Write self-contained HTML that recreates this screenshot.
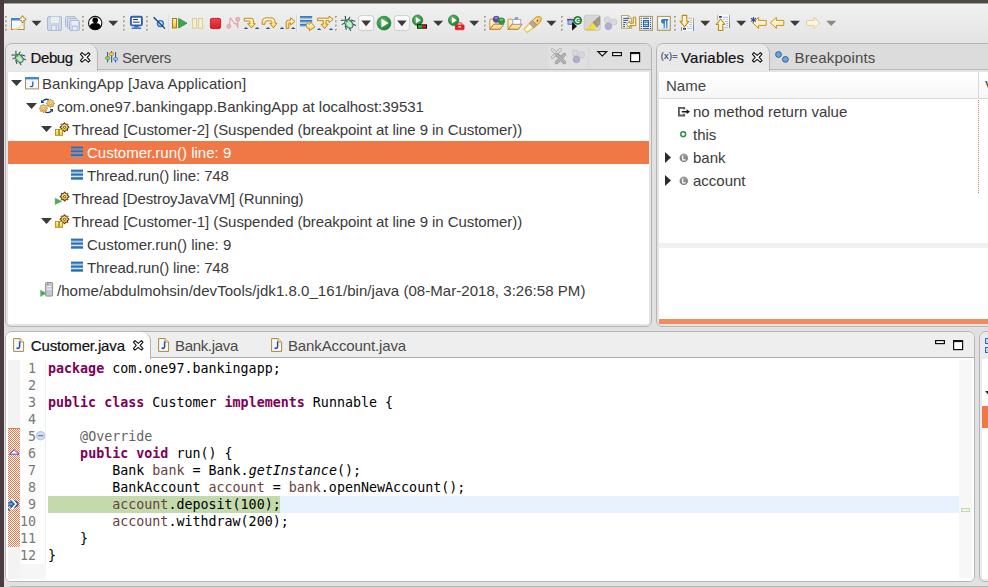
<!DOCTYPE html>
<html>
<head>
<meta charset="utf-8">
<title>Debug - Eclipse</title>
<style>
*{box-sizing:border-box;margin:0;padding:0}
html,body{width:988px;height:587px;overflow:hidden;background:#e1e1e1;}
body{position:relative;font-family:"Liberation Sans",sans-serif;font-size:15px;color:#333;}
.abs{position:absolute}
#topbar{position:absolute;left:0;top:0;width:988px;height:4px;background:linear-gradient(#4e4b44 0,#4e4b44 3px,#a19f9a 3px,#a19f9a 4px);z-index:3}
#leftbar{position:absolute;left:0;top:0;width:4px;height:587px;background:#4a3b40;z-index:4}
#toolbar{position:absolute;left:4px;top:4px;width:984px;height:39px;background:linear-gradient(#f6f6f6 0,#f0f0f0 2px,#e4e4e4 100%)}
.panel{position:absolute;border:1px solid #b5b5b5;border-radius:7px 7px 6px 6px;background:#e4e4e4;overflow:hidden}
.panel .content{position:absolute;background:#fff}
.tabbar{position:absolute;left:0;top:0;right:0;height:26px;background:#dcdcdc;border-bottom:1px solid #b9b9b9}
.tab{position:absolute;top:0;height:27px;white-space:nowrap;font-size:15px;line-height:28px;color:#4a4a4a}
.tab.active{background:#e9e9e9;border-right:1px solid #b5b5b5;border-radius:0 9px 0 0;color:#111;-webkit-text-stroke:0.2px #111}
.row{position:absolute;left:0;height:23px;line-height:23px;white-space:nowrap;font-size:15px;color:#3a3a3a}
.row.sel{background:#f07746;color:#fff}
.code{font-family:"DejaVu Sans Mono","Liberation Mono",monospace;font-size:13.33px;white-space:pre;position:absolute;left:0;height:17px;line-height:17px;color:#000}
.kw{color:#7f0055;font-weight:bold}
.lv{color:#6a3e3e}
.an{color:#646464}
.ln{position:absolute;font-family:"DejaVu Sans Mono","Liberation Mono",monospace;font-size:13.33px;color:#787878;height:17px;line-height:17px;text-align:right;width:20px}
svg{overflow:visible}
</style>
</head>
<body>
<div id="topbar"></div>
<div id="leftbar"></div>
<div id="toolbar"></div>
<svg class="abs" style="left:0;top:0" width="988" height="43" viewBox="0 0 988 43"><defs>
<linearGradient id="gy" x1="0" y1="0" x2="0" y2="1"><stop offset="0" stop-color="#fff3b0"/><stop offset="1" stop-color="#f3b72e"/></linearGradient>
<linearGradient id="gy2" x1="0" y1="0" x2="0" y2="1"><stop offset="0" stop-color="#fffadc"/><stop offset="1" stop-color="#fbd466"/></linearGradient>
<linearGradient id="gyl" x1="0" y1="0" x2="0" y2="1"><stop offset="0" stop-color="#fffbe6"/><stop offset="1" stop-color="#fbe9b3"/></linearGradient>
<linearGradient id="gb" x1="0" y1="0" x2="0" y2="1"><stop offset="0" stop-color="#2f6fb5"/><stop offset="1" stop-color="#69a8dc"/></linearGradient>
<radialGradient id="gg" cx="0.4" cy="0.35" r="0.7"><stop offset="0" stop-color="#5fc26a"/><stop offset="1" stop-color="#1d7a2c"/></radialGradient>
<linearGradient id="gfold" x1="0" y1="0" x2="0" y2="1"><stop offset="0" stop-color="#fdeeb8"/><stop offset="1" stop-color="#f7cd6c"/></linearGradient>
<linearGradient id="gred" x1="0" y1="0" x2="0" y2="1"><stop offset="0" stop-color="#f2464c"/><stop offset="1" stop-color="#d91a24"/></linearGradient>
<linearGradient id="gbtn" x1="0" y1="0" x2="0" y2="1"><stop offset="0" stop-color="#ffffff"/><stop offset="1" stop-color="#f1f1f1"/></linearGradient>
</defs><rect x="5" y="16" width="2" height="2" fill="#a8a294"/><rect x="6" y="17" width="1.2" height="1.2" fill="#e2ded2"/><rect x="5" y="20.3" width="2" height="2" fill="#a8a294"/><rect x="6" y="21.3" width="1.2" height="1.2" fill="#e2ded2"/><rect x="5" y="24.6" width="2" height="2" fill="#a8a294"/><rect x="6" y="25.6" width="1.2" height="1.2" fill="#e2ded2"/><rect x="5" y="28.9" width="2" height="2" fill="#a8a294"/><rect x="6" y="29.9" width="1.2" height="1.2" fill="#e2ded2"/><rect x="11.5" y="18.5" width="12.6" height="11" fill="#f3f8fe" stroke="#a58a4a"/><rect x="11" y="18" width="13.6" height="2.5" fill="#3d8ad2"/><path d="M13.4 29.2 C18.4 29.2 22.4 26.4 22.9 22" fill="none" stroke="#f3df9c" stroke-width="1.6"/><path d="M22.6 15.6 l1.5 2.2 2.2 1.5 -2.2 1.5 -1.5 2.2 -1.5 -2.2 -2.2 -1.5 2.2 -1.5z" fill="#c79a2a" stroke="#b08420" stroke-width="0.9" stroke-linejoin="round"/><path d="M22.6 17 v4.6 M20.3 19.3 h4.6" stroke="#fff" stroke-width="1.4"/><polygon points="31.5,20.7 41.5,20.7 36.5,26" fill="#3b3b3b"/><rect x="47.5" y="16.5" width="14" height="14" rx="1.5" fill="#cfd9ea" stroke="#a9b8d6"/><rect x="50.5" y="16.8" width="8.5" height="6.2" fill="#f4f5f5" stroke="#c5cfd9" stroke-width="0.6"/><rect x="51.6" y="18.4" width="6.2" height="0.6" fill="#d4d8dc"/><rect x="51.6" y="20.2" width="6.2" height="0.6" fill="#d4d8dc"/><rect x="51.5" y="25.2" width="7" height="5" fill="#e6ebf5" stroke="#a9b9d9" stroke-width="0.7"/><rect x="55.5" y="26.2" width="1.6" height="3.4" fill="#b9c6e0"/><rect x="65.5" y="16.5" width="10" height="10" rx="1.2" fill="#d6deec" stroke="#aebbd6"/><rect x="67.5" y="18.5" width="10" height="10" rx="1.2" fill="#d6deec" stroke="#aebbd6"/><rect x="69.5" y="20.5" width="10" height="10" rx="1.2" fill="#cfd9ea" stroke="#a9b8d6"/><rect x="71.6" y="20.9" width="6" height="4" fill="#eef0f2"/><rect x="72.5" y="26.6" width="4.6" height="3.6" fill="#e6ebf5" stroke="#a9b9d9" stroke-width="0.6"/><rect x="82" y="16" width="2" height="2" fill="#a8a294"/><rect x="83" y="17" width="1.2" height="1.2" fill="#e2ded2"/><rect x="82" y="20.3" width="2" height="2" fill="#a8a294"/><rect x="83" y="21.3" width="1.2" height="1.2" fill="#e2ded2"/><rect x="82" y="24.6" width="2" height="2" fill="#a8a294"/><rect x="83" y="25.6" width="1.2" height="1.2" fill="#e2ded2"/><rect x="82" y="28.9" width="2" height="2" fill="#a8a294"/><rect x="83" y="29.9" width="1.2" height="1.2" fill="#e2ded2"/><circle cx="95.2" cy="23.1" r="6.7" fill="#fff" stroke="#111" stroke-width="1.1"/><circle cx="95.2" cy="20.2" r="2.8" fill="#000"/><path d="M89.7 26.8 C89.9 24 92 23.1 95.2 23.1 S100.5 24 100.7 26.8 A6.7 6.7 0 0 1 89.7 26.8z" fill="#000"/><polygon points="108.2,20.7 118.2,20.7 113.2,26" fill="#3b3b3b"/><rect x="123" y="16" width="2" height="2" fill="#a8a294"/><rect x="124" y="17" width="1.2" height="1.2" fill="#e2ded2"/><rect x="123" y="20.3" width="2" height="2" fill="#a8a294"/><rect x="124" y="21.3" width="1.2" height="1.2" fill="#e2ded2"/><rect x="123" y="24.6" width="2" height="2" fill="#a8a294"/><rect x="124" y="25.6" width="1.2" height="1.2" fill="#e2ded2"/><rect x="123" y="28.9" width="2" height="2" fill="#a8a294"/><rect x="124" y="29.9" width="1.2" height="1.2" fill="#e2ded2"/><rect x="130.9" y="16.8" width="11" height="8.6" rx="1.2" fill="#fff" stroke="#2d5fb4" stroke-width="1.9"/><rect x="133" y="19" width="5" height="1.1" fill="#2b3f9a"/><rect x="133" y="21.6" width="6.5" height="1.1" fill="#2b3f9a"/><path d="M134.6 26 h3.6 l0.8 1.6 h-5.2z" fill="#2d5fb4"/><rect x="131.6" y="27.4" width="9.6" height="1.5" rx="0.5" fill="#3a78c8"/><rect x="146" y="16" width="2" height="2" fill="#a8a294"/><rect x="147" y="17" width="1.2" height="1.2" fill="#e2ded2"/><rect x="146" y="20.3" width="2" height="2" fill="#a8a294"/><rect x="147" y="21.3" width="1.2" height="1.2" fill="#e2ded2"/><rect x="146" y="24.6" width="2" height="2" fill="#a8a294"/><rect x="147" y="25.6" width="1.2" height="1.2" fill="#e2ded2"/><rect x="146" y="28.9" width="2" height="2" fill="#a8a294"/><rect x="147" y="29.9" width="1.2" height="1.2" fill="#e2ded2"/><circle cx="160.4" cy="23.6" r="3" fill="#b8d4ea" stroke="#2a78b0" stroke-width="1.3"/><line x1="153.6" y1="17.2" x2="165" y2="28.6" stroke="#223a86" stroke-width="1.3"/><rect x="168.5" y="14" width="1" height="18" fill="#d6d6d6"/><rect x="169.5" y="14" width="1" height="18" fill="#f2f2f2"/><rect x="172.5" y="18.5" width="4" height="9.4" fill="url(#gy)" stroke="#a87f12"/><polygon points="178.6,18.4 187,23.2 178.6,28" fill="#3fa44c" stroke="#2a8a3a" stroke-width="0.8"/><rect x="192.6" y="18.5" width="4" height="9.8" fill="#f7efce" stroke="#dccb9a"/><rect x="198.6" y="18.5" width="4" height="9.8" fill="#f7efce" stroke="#dccb9a"/><rect x="210.4" y="18.4" width="10.2" height="10.2" rx="1.6" fill="url(#gred)" stroke="#c4222a" stroke-width="1"/><path d="M229 26 L230.4 17.8 L234.6 23.6 H236.4 L237.9 27.8 L237.6 19.6" fill="none" stroke="#e8a0a8" stroke-width="1.1" stroke-linejoin="round"/><circle cx="228.8" cy="26.4" r="2" fill="#f3b6bd" stroke="#e08c96" stroke-width="0.7"/><circle cx="237.8" cy="19.2" r="2" fill="#f3b6bd" stroke="#e08c96" stroke-width="0.7"/><path d="M244.2 18.3 H251 Q253.5 18.3 253.5 20.8 V23.7 H255.4 L251.5 27.9 L247.6 23.7 H249.9 V21.6 Q249.9 21 249.3 21 H244.2 Z" fill="url(#gy2)" stroke="#c08a1c" stroke-width="1" stroke-linejoin="round"/><path d="M243.8 29 q2.2 -3.6 4.4 0z M254.9 29 q2.2 -3.6 4.4 0z" fill="#2c5490"/><path d="M262.2 24.3 V22 Q262.2 17.9 266.4 17.9 H270.8 Q275.1 17.9 275.1 22 V23.3 H277 L273.4 27.9 L269.8 23.3 H272 V22.4 Q272 20.8 270.2 20.8 H267 Q265 20.8 265 22.6 V24.3 Z" fill="url(#gy2)" stroke="#c08a1c" stroke-width="1" stroke-linejoin="round"/><path d="M265.8 29 q2.2 -3.6 4.4 0z" fill="#2c5490"/><path d="M286.2 28.6 V22.6 Q286.2 20.2 288.4 20.2 H290.6 V17.7 L295 21.4 L290.6 25.1 V22.8 H289.2 Q288.8 22.8 288.8 23.2 V28.6 Z" fill="url(#gy2)" stroke="#c08a1c" stroke-width="1" stroke-linejoin="round"/><path d="M279.8 29 q2.2 -3.6 4.4 0z M291 29 q2.2 -3.6 4.4 0z" fill="#2c5490"/><rect x="296.0" y="14" width="1" height="18" fill="#d6d6d6"/><rect x="297.0" y="14" width="1" height="18" fill="#f2f2f2"/><rect x="300" y="16" width="12.2" height="2.6" fill="url(#gb)"/><rect x="300" y="19.9" width="12.2" height="2.6" fill="url(#gb)"/><rect x="300" y="23.8" width="7" height="2.6" fill="url(#gb)"/><path d="M306.4 23.6 q1.4 -0.9 2.4 0.6 q0.8 -0.2 1.6 -0.8 v-1.9 l4.5 5.4 -5.6 3.8 v-2.4 q-3.6 0.6 -2.9 -4.7z" fill="url(#gy2)" stroke="#c08a1c" stroke-width="1" stroke-linejoin="round"/><path d="M317.4 18.2 H329 V16 L333.2 19.4 L329 22.6 V20.6 H326 V24.2 H328.2 L324.6 28.6 L321 24.2 H323.3 V20.6 H317.4 Z" fill="url(#gy2)" stroke="#c08a1c" stroke-width="1" stroke-linejoin="round"/><path d="M317.1 29.9 q2 -3.4 4 0z M329 29.9 q2 -3.4 4 0z" fill="#2c5490"/><rect x="335" y="16" width="2" height="2" fill="#a8a294"/><rect x="336" y="17" width="1.2" height="1.2" fill="#e2ded2"/><rect x="335" y="20.3" width="2" height="2" fill="#a8a294"/><rect x="336" y="21.3" width="1.2" height="1.2" fill="#e2ded2"/><rect x="335" y="24.6" width="2" height="2" fill="#a8a294"/><rect x="336" y="25.6" width="1.2" height="1.2" fill="#e2ded2"/><rect x="335" y="28.9" width="2" height="2" fill="#a8a294"/><rect x="336" y="29.9" width="1.2" height="1.2" fill="#e2ded2"/><g transform="translate(348.9,23.9) scale(1.0)"><g stroke="#274b3c" stroke-width="1.05" fill="none" stroke-linecap="round"><line x1="-3.5" y1="-7.7" x2="-3.5" y2="-4.6"/><line x1="0.9" y1="-6.6" x2="-0.7" y2="-4.0"/><line x1="-7.8" y1="-3.6" x2="-4.2" y2="-3.6"/><line x1="-6.8" y1="0.5" x2="-4.2" y2="-0.8"/><line x1="2.2" y1="-3.8" x2="5.8" y2="-2.6"/><line x1="3.6" y1="0.1" x2="6.8" y2="1.5"/><line x1="-3.6" y1="2.2" x2="-2.6" y2="5.4"/><line x1="0.3" y1="4.2" x2="1.7" y2="6.6"/></g><g transform="rotate(-40)"><ellipse cx="0" cy="0" rx="3.4" ry="4.8" fill="#a6d696" stroke="#1f6f86" stroke-width="1.1"/><ellipse cx="0" cy="0.8" rx="1.8" ry="3" fill="#cdeac2"/><circle cx="0" cy="-3.7" r="1.2" fill="#3a9a48"/></g></g><rect x="358.5" y="15.6" width="15.2" height="15" rx="2.6" fill="url(#gbtn)" stroke="#c9c9c9" stroke-width="0.9"/><polygon points="361.3,20.6 370.9,20.6 366.1,26.2" fill="#3b3b3b"/><circle cx="384" cy="23.1" r="6.9" fill="url(#gg)" stroke="#2a7a36" stroke-width="0.8"/><polygon points="381.4,18.8 381.4,27.4 388.6,23.1" fill="#fff"/><rect x="394.3" y="15.6" width="15.2" height="15" rx="2.6" fill="url(#gbtn)" stroke="#c9c9c9" stroke-width="0.9"/><polygon points="397.1,20.6 406.7,20.6 401.90000000000003,26.2" fill="#3b3b3b"/><circle cx="417.6" cy="20.2" r="5.2" fill="url(#gg)" stroke="#2a7a36" stroke-width="0.7"/><polygon points="415.8,17 415.8,23.4 420.8,20.2" fill="#fff"/><rect x="417" y="24.3" width="10" height="4.4" fill="#111"/><rect x="418" y="25.3" width="4" height="2.4" fill="#10d030"/><rect x="422" y="25.3" width="4" height="2.4" fill="#f01818"/><polygon points="433.2,20.7 443.2,20.7 438.2,26" fill="#3b3b3b"/><circle cx="453.6" cy="20.2" r="5.2" fill="url(#gg)" stroke="#2a7a36" stroke-width="0.7"/><polygon points="451.8,17 451.8,23.4 456.8,20.2" fill="#fff"/><rect x="455.3" y="24.8" width="8.8" height="5" rx="0.8" fill="#ee2a30" stroke="#d0141c" stroke-width="0.6"/><rect x="457.6" y="22.9" width="4.2" height="2.2" rx="0.5" fill="#fbe4e4" stroke="#e0202a" stroke-width="0.9"/><rect x="455.6" y="26.4" width="8.2" height="0.7" fill="#a81018"/><rect x="455.6" y="28" width="8.2" height="0.6" fill="#c8181e"/><rect x="458.2" y="26" width="3" height="1.6" fill="#f8b0b0"/><polygon points="469.2,20.7 479.2,20.7 474.2,26" fill="#3b3b3b"/><rect x="484" y="16" width="2" height="2" fill="#a8a294"/><rect x="485" y="17" width="1.2" height="1.2" fill="#e2ded2"/><rect x="484" y="20.3" width="2" height="2" fill="#a8a294"/><rect x="485" y="21.3" width="1.2" height="1.2" fill="#e2ded2"/><rect x="484" y="24.6" width="2" height="2" fill="#a8a294"/><rect x="485" y="25.6" width="1.2" height="1.2" fill="#e2ded2"/><rect x="484" y="28.9" width="2" height="2" fill="#a8a294"/><rect x="485" y="29.9" width="1.2" height="1.2" fill="#e2ded2"/><path d="M489.79999999999995 29.2 V20 q0 -0.9 0.9 -0.9 h2.7 l1 1.2 h5.6 q0.8 0 0.8 0.8 V24.2 H494.0 Z" fill="#fdf0c6" stroke="#c48a3a" stroke-width="0.9" stroke-linejoin="round"/><path d="M489.9 29.4 L494.0 24.2 H503.79999999999995 L500.2 29.4 Z" fill="url(#gfold)" stroke="#b9782a" stroke-width="0.9" stroke-linejoin="round"/><circle cx="496.3" cy="19.3" r="3.2" fill="#5e4ca4" stroke="#4a3a90" stroke-width="0.5"/><ellipse cx="496.3" cy="17.9" rx="1.8" ry="0.9" fill="#9a8ed0"/><circle cx="501.5" cy="21.1" r="3.3" fill="#2f9448" stroke="#2a843c" stroke-width="0.5"/><ellipse cx="501.5" cy="19.7" rx="1.8" ry="0.9" fill="#7cc890"/><path d="M508.0 29.2 V20 q0 -0.9 0.9 -0.9 h2.7 l1 1.2 h5.6 q0.8 0 0.8 0.8 V24.2 H512.2 Z" fill="#fdf0c6" stroke="#c48a3a" stroke-width="0.9" stroke-linejoin="round"/><path d="M508.1 29.4 L512.2 24.2 H522.0 L518.4 29.4 Z" fill="url(#gfold)" stroke="#b9782a" stroke-width="0.9" stroke-linejoin="round"/><rect x="512.8" y="19.4" width="8" height="4.8" fill="#fbfcfe" stroke="#8a9ac4" stroke-width="0.8"/><rect x="514.6" y="17.3" width="3.6" height="1.9" rx="0.6" fill="#7f94c4"/><g transform="translate(532.8,24.4) rotate(-41.4)"><path d="M-1.4 -3 L-9.6 -2.2 L-9.6 2.2 L-1.4 3 Z" fill="#fff6c8" stroke="#f0bc3c" stroke-width="1.1"/><path d="M-1.4 -1.2 L-9.4 -0.8 L-9.4 0.8 L-1.4 1.2 Z" fill="#ffffff"/><path d="M2.2 -3.3 H7.4 L10.6 -1.2 V1.2 L7.4 3.3 H2.2 Z" fill="#f8c962" stroke="#c48a30" stroke-width="0.8" stroke-linejoin="round"/><rect x="2.6" y="-2.2" width="5" height="1.4" fill="#fde6a0"/><rect x="-1.8" y="-3.4" width="4.2" height="6.8" rx="0.8" fill="#aeaaa6" stroke="#b08a48" stroke-width="0.7"/><circle cx="6" cy="0.2" r="0.8" fill="#2a4a9a"/></g><polygon points="546.4,20.7 556.4,20.7 551.4,26" fill="#3b3b3b"/><rect x="561" y="16" width="2" height="2" fill="#a8a294"/><rect x="562" y="17" width="1.2" height="1.2" fill="#e2ded2"/><rect x="561" y="20.3" width="2" height="2" fill="#a8a294"/><rect x="562" y="21.3" width="1.2" height="1.2" fill="#e2ded2"/><rect x="561" y="24.6" width="2" height="2" fill="#a8a294"/><rect x="562" y="25.6" width="1.2" height="1.2" fill="#e2ded2"/><rect x="561" y="28.9" width="2" height="2" fill="#a8a294"/><rect x="562" y="29.9" width="1.2" height="1.2" fill="#e2ded2"/><rect x="567.6" y="17.6" width="6" height="1.6" fill="#f0c8c4"/><rect x="568" y="19.8" width="5.4" height="4.4" fill="#a8c8f0" stroke="#4a5aa8" stroke-width="0.8"/><rect x="567" y="19" width="7.4" height="1.3" fill="#5a4a9a"/><polygon points="572,21.8 572,30.8 577,26.3" fill="#1a1a1a"/><circle cx="577.7" cy="20.4" r="3.9" fill="#2c9a48" stroke="#167428" stroke-width="1"/><path d="M579.4 19 a2.1 2.1 0 1 0 0 2.8 M577.6 20.5 h2" fill="none" stroke="#fff" stroke-width="1.1"/><rect x="584.2" y="15.2" width="16" height="15.4" rx="2.6" fill="#dcdcdc" stroke="#c4c4c4" stroke-width="0.9"/><rect x="585.2" y="16.2" width="14" height="13.4" rx="2" fill="#d6d6d6"/><path d="M600.2 15.4 V24 L596.8 27.6 L592.2 22.6 Z" fill="#9c9680"/><path d="M597.4 20 L600 22.4 M596 21.4 L598.8 24.2" stroke="#bdb8a4" stroke-width="0.7"/><path d="M592.2 22.6 L596.8 27.6 L594.4 29.6 L588.4 28.6 Z" fill="#f6de3c"/><path d="M591.6 23.4 L589.4 27.6" stroke="#e8c41c" stroke-width="1"/><rect x="584.4" y="28.9" width="9.6" height="1.2" fill="#eccc20"/><circle cx="607.2" cy="19.9" r="3.1" fill="#dadada" stroke="#c6c6c6" stroke-width="0.7"/><circle cx="613.9" cy="22" r="3.1" fill="#dadada" stroke="#c6c6c6" stroke-width="0.7"/><circle cx="608.4" cy="26.3" r="3.4" fill="#b3add4" stroke="#a29cc6" stroke-width="0.6"/><defs><linearGradient id="gpg" x1="0" y1="0" x2="0" y2="1"><stop offset="0" stop-color="#ffffff"/><stop offset="1" stop-color="#dfe8f6"/></linearGradient></defs><path d="M621.6 15.5 h6.6 l3.4 3.2 v9.6 h-10z" fill="url(#gpg)" stroke="#b8a868" stroke-width="1.1"/><path d="M628.2 15.5 v3.2 h3.4" fill="#f4ecc8" stroke="#b8a868" stroke-width="0.8"/><rect x="623.2" y="17.8" width="6" height="1.1" fill="#3a5aa8"/><rect x="623.2" y="19.8" width="5" height="1.1" fill="#3a5aa8"/><rect x="623.2" y="21.9" width="3.2" height="1.1" fill="#3a5aa8"/><rect x="623.2" y="23.9" width="1.8" height="1.1" fill="#3a5aa8"/><rect x="623.2" y="25.9" width="1.8" height="1.1" fill="#3a5aa8"/><path d="M633.3 17.2 H635.7 V25.6 H629.8 V27.8 L626.2 24.4 L629.8 21 V23.2 H633.3 Z" fill="#fff3c0" stroke="#c08a1a" stroke-width="1" stroke-linejoin="round"/><rect x="639.6" y="16.5" width="12.8" height="13.8" fill="url(#gpg)" stroke="#b0a060" stroke-width="1.2"/><rect x="640.9" y="17.8" width="1" height="1" fill="#2a4a98"/><rect x="650" y="17.8" width="1" height="1" fill="#2a4a98"/><rect x="640.9" y="19.8" width="1" height="1" fill="#2a4a98"/><rect x="650" y="19.8" width="1" height="1" fill="#2a4a98"/><rect x="640.9" y="21.9" width="1" height="1" fill="#2a4a98"/><rect x="650" y="21.9" width="1" height="1" fill="#2a4a98"/><rect x="640.9" y="23.9" width="1" height="1" fill="#2a4a98"/><rect x="650" y="23.9" width="1" height="1" fill="#2a4a98"/><rect x="640.9" y="26.0" width="1" height="1" fill="#2a4a98"/><rect x="650" y="26.0" width="1" height="1" fill="#2a4a98"/><rect x="640.9" y="28.0" width="1" height="1" fill="#2a4a98"/><rect x="650" y="28.0" width="1" height="1" fill="#2a4a98"/><rect x="643" y="17.8" width="6" height="1" fill="#3a5aa8"/><rect x="643" y="28" width="6" height="1" fill="#3a5aa8"/><rect x="643" y="20" width="6" height="7" fill="#2f5fa8"/><rect x="644" y="21.4" width="4" height="0.9" fill="#e8f0fa"/><rect x="644" y="23.1" width="4" height="0.9" fill="#e8f0fa"/><rect x="644" y="24.8" width="4" height="0.9" fill="#e8f0fa"/><rect x="657.5" y="16.5" width="12.8" height="13.8" fill="url(#gpg)" stroke="#b0a060" stroke-width="1.2"/><path d="M668.2 19 v1.4 h-0.7 v8.2 h-1.5 v-8.2 h-1 v8.2 h-1.5 v-4.8 a2.45 2.45 0 0 1 -0.8 -4.8z" fill="url(#gb)"/><rect x="674" y="16" width="2" height="2" fill="#a8a294"/><rect x="675" y="17" width="1.2" height="1.2" fill="#e2ded2"/><rect x="674" y="20.3" width="2" height="2" fill="#a8a294"/><rect x="675" y="21.3" width="1.2" height="1.2" fill="#e2ded2"/><rect x="674" y="24.6" width="2" height="2" fill="#a8a294"/><rect x="675" y="25.6" width="1.2" height="1.2" fill="#e2ded2"/><rect x="674" y="28.9" width="2" height="2" fill="#a8a294"/><rect x="675" y="29.9" width="1.2" height="1.2" fill="#e2ded2"/><defs><linearGradient id="gyh" x1="0" y1="0" x2="1" y2="0"><stop offset="0" stop-color="#fbd060"/><stop offset="0.5" stop-color="#fffbe8"/><stop offset="1" stop-color="#fbd060"/></linearGradient></defs><rect x="681.6" y="17.8" width="12" height="13" fill="#fbfcfe"/><rect x="693" y="17.8" width="1" height="13" fill="#a8a888"/><rect x="693" y="25" width="1" height="5.8" fill="#6a88b0"/><rect x="681" y="27" width="1" height="3.8" fill="#7a90b8"/><rect x="688" y="17.8" width="4.2" height="0.9" fill="#a8b2dc"/><rect x="690" y="19.8" width="2.2" height="0.9" fill="#a8b2dc"/><rect x="690" y="21.9" width="2.2" height="0.9" fill="#a8b2dc"/><rect x="689" y="23.9" width="3.2" height="0.9" fill="#a8b2dc"/><rect x="687" y="26.0" width="1.6" height="0.9" fill="#a8b2dc"/><rect x="690" y="26.0" width="2.2" height="0.9" fill="#a8b2dc"/><rect x="687.4" y="28.0" width="4.8" height="0.9" fill="#a8b2dc"/><rect x="683" y="27.9" width="3" height="1.8" fill="#2a4a9a"/><path d="M682.2 15.4 H686.8 V21.2 H689 L684.5 26.9 L680 21.2 H682.2 Z" fill="url(#gyh)" stroke="#c08a1a" stroke-width="1.1" stroke-linejoin="round"/><polygon points="700.2,20.7 710.2,20.7 705.2,26" fill="#3b3b3b"/><rect x="717.6" y="14.8" width="12" height="13.4" fill="#fbfcfe"/><rect x="729" y="14.8" width="1" height="13.4" fill="#a8a888"/><rect x="729" y="22" width="1" height="6" fill="#6a88b0"/><rect x="717.2" y="14.8" width="1" height="5.4" fill="#b0a870"/><rect x="719" y="16" width="2.9" height="1.8" fill="#2a4a9a"/><rect x="723" y="16.8" width="5.2" height="0.9" fill="#a8b2dc"/><rect x="723" y="18.9" width="2.0" height="0.9" fill="#a8b2dc"/><rect x="726.4" y="18.9" width="1.8" height="0.9" fill="#a8b2dc"/><rect x="725" y="21.0" width="3.2" height="0.9" fill="#a8b2dc"/><rect x="726" y="23.0" width="2.2" height="0.9" fill="#a8b2dc"/><rect x="726" y="24.9" width="2.2" height="0.9" fill="#a8b2dc"/><rect x="724" y="26.9" width="4.2" height="0.9" fill="#a8b2dc"/><path d="M718.4 30.5 H722.8 V24.5 H725 L720.6 19 L716.2 24.5 H718.4 Z" fill="url(#gyh)" stroke="#c08a1a" stroke-width="1.1" stroke-linejoin="round"/><polygon points="736.2,20.7 746.2,20.7 741.2,26" fill="#3b3b3b"/><path d="M752.6 22.8 l6 -5.4 v3 h7.6 v5 h-7.6 v3z" fill="url(#gyl)" stroke="#c89418" stroke-width="1" stroke-linejoin="round"/><path d="M753.4 17 v5.6 M750.8 18.2 l5.2 3.2 M756 18.2 l-5.2 3.2" stroke="#2a4aa0" stroke-width="1.1"/><path d="M770.4 22.8 l6 -5.4 v3 h7.4 v5 h-7.4 v3z" fill="url(#gyl)" stroke="#c89418" stroke-width="1" stroke-linejoin="round"/><polygon points="790,20.7 800,20.7 795,26" fill="#3b3b3b"/><path d="M820 22.8 l-6 -5.4 v3 h-7.4 v5 h7.4 v3z" fill="#fbf6e4" stroke="#e3cd98" stroke-width="1" stroke-linejoin="round"/><polygon points="826.2,20.7 836.2,20.7 831.2,26" fill="#8c8a86"/></svg>

<div class="panel" id="debug" style="left:5px;top:43px;width:647px;height:284px">
  <div class="tabbar">
    <div class="tab active" style="left:0;width:92px"><svg class="abs" style="left:5px;top:6px" width="16" height="16" viewBox="0 0 16 16"><g transform="translate(8.3,8.4) scale(0.96)"><g stroke="#274b3c" stroke-width="1.05" fill="none" stroke-linecap="round"><line x1="-3.5" y1="-7.7" x2="-3.5" y2="-4.6"/><line x1="0.9" y1="-6.6" x2="-0.7" y2="-4.0"/><line x1="-7.8" y1="-3.6" x2="-4.2" y2="-3.6"/><line x1="-6.8" y1="0.5" x2="-4.2" y2="-0.8"/><line x1="2.2" y1="-3.8" x2="5.8" y2="-2.6"/><line x1="3.6" y1="0.1" x2="6.8" y2="1.5"/><line x1="-3.6" y1="2.2" x2="-2.6" y2="5.4"/><line x1="0.3" y1="4.2" x2="1.7" y2="6.6"/></g><g transform="rotate(-40)"><ellipse cx="0" cy="0" rx="3.4" ry="4.8" fill="#a6d696" stroke="#1f6f86" stroke-width="1.1"/><ellipse cx="0" cy="0.8" rx="1.8" ry="3" fill="#cdeac2"/><circle cx="0" cy="-3.7" r="1.2" fill="#3a9a48"/></g></g></svg><span class="abs" style="left:24.6px;letter-spacing:-0.44px">Debug</span><svg class="abs" style="left:74px;top:8px" width="11" height="11" viewBox="0 0 11 11"><path d="M2 0.6 L5.2 3.4 L8.4 0.6 L10 2.2 L7.2 5.4 L10 8.6 L8.4 10.2 L5.2 7.4 L2 10.2 L0.4 8.6 L3.2 5.4 L0.4 2.2 Z" fill="#fff" stroke="#111" stroke-width="1.1" stroke-linejoin="round"/></svg></div>
    <div class="tab" style="left:92px"><svg class="abs" style="left:7px;top:7px" width="14" height="13" viewBox="0 0 14 13"><g stroke="#3a5ab0" stroke-width="1.1"><line x1="2.6" y1="1" x2="2.6" y2="11.4"/><line x1="6.6" y1="0" x2="6.6" y2="11.4"/><line x1="10.6" y1="1" x2="10.6" y2="11.4"/></g><rect x="0.5" y="5.6" width="4.3" height="3" rx="1.4" fill="#9ad44a" stroke="#4a8a1a" stroke-width="0.6"/><rect x="4.5" y="1.6" width="4.3" height="3" rx="1.4" fill="#f6cc3a" stroke="#a8801a" stroke-width="0.6"/><rect x="8.5" y="6.6" width="4.3" height="3" rx="1.4" fill="#9ac8f0" stroke="#3a6ab0" stroke-width="0.6"/></svg><span class="abs" style="left:24px;letter-spacing:-0.39px">Servers</span></div>
    <div class="abs" style="left:543px;top:2px;width:38px;height:23px;background:#e0e0e0"></div><div class="abs" style="left:584px;top:2px;width:60px;height:23px;background:#dfdfdf"></div><svg class="abs" style="left:544px;top:3px" width="17" height="20" viewBox="0 0 17 20"><g stroke="#a6a6a6" stroke-width="3.2" stroke-linecap="round"><line x1="2.5000000000000004" y1="2.6" x2="10.3" y2="10.4"/><line x1="10.3" y1="2.6" x2="2.5000000000000004" y2="10.4"/></g><g stroke="#dedede" stroke-width="2" stroke-linecap="round"><line x1="2.5000000000000004" y1="2.6" x2="10.3" y2="10.4"/><line x1="10.3" y1="2.6" x2="2.5000000000000004" y2="10.4"/></g><g stroke="#9a9a9a" stroke-width="3.6" stroke-linecap="round"><line x1="6.6" y1="7.6" x2="14.4" y2="15.4"/><line x1="14.4" y1="7.6" x2="6.6" y2="15.4"/></g><g stroke="#b2b2b2" stroke-width="2.5" stroke-linecap="round"><line x1="6.6" y1="7.6" x2="14.4" y2="15.4"/><line x1="14.4" y1="7.6" x2="6.6" y2="15.4"/></g></svg><svg class="abs" style="left:565px;top:5px" width="15" height="15" viewBox="0 0 15 15"><circle cx="4.1" cy="3.9" r="3" fill="#d8d8d8" stroke="#c4c4c4" stroke-width="0.7"/><circle cx="10.7" cy="5.9" r="3.1" fill="#d8d8d8" stroke="#c4c4c4" stroke-width="0.7"/><circle cx="5.4" cy="10.4" r="3.4" fill="#b3add4" stroke="#a29cc6" stroke-width="0.6"/></svg><svg class="abs" style="left:591px;top:7px" width="11" height="7" viewBox="0 0 11 7"><polygon points="0.9,0.7 9.7,0.7 5.3,5" fill="#fff" stroke="#111" stroke-width="1.2" stroke-linejoin="miter"/></svg><svg class="abs" style="left:606px;top:7.6px" width="10" height="5" viewBox="0 0 10 5"><rect x="0.6" y="0.6" width="8.8" height="3" fill="#fff" stroke="#111" stroke-width="1.2"/></svg><svg class="abs" style="left:624px;top:8px" width="11" height="11" viewBox="0 0 11 11"><rect x="0.6" y="0.6" width="9" height="9" fill="#fff" stroke="#111" stroke-width="1.2"/><rect x="0.6" y="0.6" width="9" height="1.5" fill="#111"/></svg>
  </div>
  <div class="content" id="dtree" style="left:2px;top:28px;width:641px;height:252px">
<div class="row" style="top:0px;width:641px"><svg class="abs" style="left:2.5px;top:8.2px" width="11" height="6" viewBox="0 0 11 6"><polygon points="0,0 11,0 5.5,6" fill="#3b3b3b"/></svg><svg class="abs" style="left:17px;top:5px" width="14" height="12" viewBox="0 0 14 12"><rect x="0.5" y="0.5" width="13" height="11.4" fill="#f4f8fe" stroke="#a89050"/><rect x="0" y="0" width="14" height="2.4" fill="#3d8ad2"/><path d="M7.8 4.4 v3.8 q0 1.4 -1.4 1.4 q-0.8 0 -1.2 -0.6" fill="none" stroke="#2a4a9a" stroke-width="1.2"/></svg><span class="abs" style="left:34px;letter-spacing:0.08px">BankingApp [Java Application]</span></div>
<div class="row" style="top:23px;width:641px"><svg class="abs" style="left:17.5px;top:8.2px" width="11" height="6" viewBox="0 0 11 6"><polygon points="0,0 11,0 5.5,6" fill="#3b3b3b"/></svg><svg class="abs" style="left:31px;top:4px" width="16" height="14" viewBox="0 0 16 14"><defs><linearGradient id="gg1" x1="0" y1="0" x2="0" y2="1"><stop offset="0" stop-color="#fff27a"/><stop offset="1" stop-color="#f7ac2c"/></linearGradient><linearGradient id="gp1" x1="0" y1="0" x2="0" y2="1"><stop offset="0" stop-color="#fff6b8"/><stop offset="1" stop-color="#ecc838"/></linearGradient></defs><path d="M9.9 0.7 Q5.6 -0.7 3.3 2.6" fill="none" stroke="#0a3f8f" stroke-width="1.3"/><polygon points="2,0.8 2,4.1 5.4,4.1" fill="#0a3f8f"/><path d="M6.2 13.2 Q10.5 14.6 12.8 11.3" fill="none" stroke="#0a3f8f" stroke-width="1.3"/><polygon points="14,9.9 10.6,9.9 14,13.2" fill="#0a3f8f"/><polygon points="11.01,0.43 11.99,0.43 12.16,1.71 13.01,2.06 14.03,1.27 14.73,1.97 13.94,2.99 14.29,3.84 15.57,4.01 15.57,4.99 14.29,5.16 13.94,6.01 14.73,7.03 14.03,7.73 13.01,6.94 12.16,7.29 11.99,8.57 11.01,8.57 10.84,7.29 9.99,6.94 8.97,7.73 8.27,7.03 9.06,6.01 8.71,5.16 7.43,4.99 7.43,4.01 8.71,3.84 9.06,2.99 8.27,1.97 8.97,1.27 9.99,2.06 10.84,1.71" fill="url(#gg1)" stroke="#b08a58" stroke-width="0.8" stroke-linejoin="round"/><circle cx="11.5" cy="4.5" r="1.07" fill="#fff" stroke="#b08a58" stroke-width="0.7"/><polygon points="4.01,5.33 4.99,5.33 5.16,6.61 6.01,6.96 7.03,6.17 7.73,6.87 6.94,7.89 7.29,8.74 8.57,8.91 8.57,9.89 7.29,10.06 6.94,10.91 7.73,11.93 7.03,12.63 6.01,11.84 5.16,12.19 4.99,13.47 4.01,13.47 3.84,12.19 2.99,11.84 1.97,12.63 1.27,11.93 2.06,10.91 1.71,10.06 0.43,9.89 0.43,8.91 1.71,8.74 2.06,7.89 1.27,6.87 1.97,6.17 2.99,6.96 3.84,6.61" fill="url(#gg1)" stroke="#b08a58" stroke-width="0.8" stroke-linejoin="round"/><circle cx="4.5" cy="9.4" r="1.07" fill="#fff" stroke="#b08a58" stroke-width="0.7"/></svg><span class="abs" style="left:49px;letter-spacing:0px">com.one97.bankingapp.BankingApp at localhost:39531</span></div>
<div class="row" style="top:46px;width:641px"><svg class="abs" style="left:32.5px;top:8.2px" width="11" height="6" viewBox="0 0 11 6"><polygon points="0,0 11,0 5.5,6" fill="#3b3b3b"/></svg><svg class="abs" style="left:46px;top:3px" width="16" height="16" viewBox="0 0 16 16"><defs><linearGradient id="gg1" x1="0" y1="0" x2="0" y2="1"><stop offset="0" stop-color="#fff27a"/><stop offset="1" stop-color="#f7ac2c"/></linearGradient><linearGradient id="gp1" x1="0" y1="0" x2="0" y2="1"><stop offset="0" stop-color="#fff6b8"/><stop offset="1" stop-color="#ecc838"/></linearGradient></defs><polygon points="9.97,1.93 11.03,1.93 11.25,3.13 12.21,3.53 13.22,2.84 13.96,3.58 13.27,4.59 13.67,5.55 14.87,5.77 14.87,6.83 13.67,7.05 13.27,8.01 13.96,9.02 13.22,9.76 12.21,9.07 11.25,9.47 11.03,10.67 9.97,10.67 9.75,9.47 8.79,9.07 7.78,9.76 7.04,9.02 7.73,8.01 7.33,7.05 6.13,6.83 6.13,5.77 7.33,5.55 7.73,4.59 7.04,3.58 7.78,2.84 8.79,3.53 9.75,3.13" fill="url(#gg1)" stroke="#4a2a1a" stroke-width="1" stroke-linejoin="round"/><circle cx="10.5" cy="6.3" r="1.14" fill="#fbe9b0" stroke="#4a2a1a" stroke-width="0.7"/><rect x="1" y="8" width="8" height="6.9" fill="#b8961c"/><rect x="2.1" y="8.9" width="2" height="5.2" fill="url(#gp1)"/><rect x="6" y="8.9" width="2" height="5.2" fill="url(#gp1)"/></svg><span class="abs" style="left:64px;letter-spacing:-0.065px">Thread [Customer-2] (Suspended (breakpoint at line 9 in Customer))</span></div>
<div class="row sel" style="top:69px;width:641px"><svg class="abs" style="left:63px;top:5px" width="12" height="12" viewBox="0 0 12 12"><defs><linearGradient id="fb" x1="0" y1="0" x2="0" y2="1"><stop offset="0" stop-color="#2a67aa"/><stop offset="1" stop-color="#5b9fd6"/></linearGradient></defs><rect x="0" y="0.6" width="12" height="2.7" fill="#2d6db2"/><rect x="0" y="2.4" width="12" height="0.9" fill="#66a6da"/><rect x="0" y="4.4" width="12" height="2.7" fill="#2d6db2"/><rect x="0" y="6.2" width="12" height="0.9" fill="#66a6da"/><rect x="0" y="8.2" width="12" height="2.7" fill="#2d6db2"/><rect x="0" y="10.0" width="12" height="0.9" fill="#66a6da"/></svg><span class="abs" style="left:79px;letter-spacing:0px">Customer.run() line: 9</span></div>
<div class="row" style="top:92px;width:641px"><svg class="abs" style="left:63px;top:5px" width="12" height="12" viewBox="0 0 12 12"><defs><linearGradient id="fb" x1="0" y1="0" x2="0" y2="1"><stop offset="0" stop-color="#2a67aa"/><stop offset="1" stop-color="#5b9fd6"/></linearGradient></defs><rect x="0" y="0.6" width="12" height="2.7" fill="#2d6db2"/><rect x="0" y="2.4" width="12" height="0.9" fill="#66a6da"/><rect x="0" y="4.4" width="12" height="2.7" fill="#2d6db2"/><rect x="0" y="6.2" width="12" height="0.9" fill="#66a6da"/><rect x="0" y="8.2" width="12" height="2.7" fill="#2d6db2"/><rect x="0" y="10.0" width="12" height="0.9" fill="#66a6da"/></svg><span class="abs" style="left:79px;letter-spacing:-0.11px">Thread.run() line: 748</span></div>
<div class="row" style="top:115px;width:641px"><svg class="abs" style="left:46px;top:3px" width="16" height="16" viewBox="0 0 16 16"><defs><linearGradient id="gg1" x1="0" y1="0" x2="0" y2="1"><stop offset="0" stop-color="#fff27a"/><stop offset="1" stop-color="#f7ac2c"/></linearGradient><linearGradient id="gp1" x1="0" y1="0" x2="0" y2="1"><stop offset="0" stop-color="#fff6b8"/><stop offset="1" stop-color="#ecc838"/></linearGradient></defs><polygon points="10.07,2.23 11.13,2.23 11.35,3.43 12.31,3.83 13.32,3.14 14.06,3.88 13.37,4.89 13.77,5.85 14.97,6.07 14.97,7.13 13.77,7.35 13.37,8.31 14.06,9.32 13.32,10.06 12.31,9.37 11.35,9.77 11.13,10.97 10.07,10.97 9.85,9.77 8.89,9.37 7.88,10.06 7.14,9.32 7.83,8.31 7.43,7.35 6.23,7.13 6.23,6.07 7.43,5.85 7.83,4.89 7.14,3.88 7.88,3.14 8.89,3.83 9.85,3.43" fill="url(#gg1)" stroke="#4a2a1a" stroke-width="1" stroke-linejoin="round"/><circle cx="10.6" cy="6.6" r="1.14" fill="#fbe9b0" stroke="#4a2a1a" stroke-width="0.7"/><polygon points="1,8 1,14.7 8,11.35" fill="#4aa860" stroke="#7cc890" stroke-width="0.5"/></svg><span class="abs" style="left:64px;letter-spacing:-0.14px">Thread [DestroyJavaVM] (Running)</span></div>
<div class="row" style="top:138px;width:641px"><svg class="abs" style="left:32.5px;top:8.2px" width="11" height="6" viewBox="0 0 11 6"><polygon points="0,0 11,0 5.5,6" fill="#3b3b3b"/></svg><svg class="abs" style="left:46px;top:3px" width="16" height="16" viewBox="0 0 16 16"><defs><linearGradient id="gg1" x1="0" y1="0" x2="0" y2="1"><stop offset="0" stop-color="#fff27a"/><stop offset="1" stop-color="#f7ac2c"/></linearGradient><linearGradient id="gp1" x1="0" y1="0" x2="0" y2="1"><stop offset="0" stop-color="#fff6b8"/><stop offset="1" stop-color="#ecc838"/></linearGradient></defs><polygon points="9.97,1.93 11.03,1.93 11.25,3.13 12.21,3.53 13.22,2.84 13.96,3.58 13.27,4.59 13.67,5.55 14.87,5.77 14.87,6.83 13.67,7.05 13.27,8.01 13.96,9.02 13.22,9.76 12.21,9.07 11.25,9.47 11.03,10.67 9.97,10.67 9.75,9.47 8.79,9.07 7.78,9.76 7.04,9.02 7.73,8.01 7.33,7.05 6.13,6.83 6.13,5.77 7.33,5.55 7.73,4.59 7.04,3.58 7.78,2.84 8.79,3.53 9.75,3.13" fill="url(#gg1)" stroke="#4a2a1a" stroke-width="1" stroke-linejoin="round"/><circle cx="10.5" cy="6.3" r="1.14" fill="#fbe9b0" stroke="#4a2a1a" stroke-width="0.7"/><rect x="1" y="8" width="8" height="6.9" fill="#b8961c"/><rect x="2.1" y="8.9" width="2" height="5.2" fill="url(#gp1)"/><rect x="6" y="8.9" width="2" height="5.2" fill="url(#gp1)"/></svg><span class="abs" style="left:64px;letter-spacing:-0.065px">Thread [Customer-1] (Suspended (breakpoint at line 9 in Customer))</span></div>
<div class="row" style="top:161px;width:641px"><svg class="abs" style="left:63px;top:5px" width="12" height="12" viewBox="0 0 12 12"><defs><linearGradient id="fb" x1="0" y1="0" x2="0" y2="1"><stop offset="0" stop-color="#2a67aa"/><stop offset="1" stop-color="#5b9fd6"/></linearGradient></defs><rect x="0" y="0.6" width="12" height="2.7" fill="#2d6db2"/><rect x="0" y="2.4" width="12" height="0.9" fill="#66a6da"/><rect x="0" y="4.4" width="12" height="2.7" fill="#2d6db2"/><rect x="0" y="6.2" width="12" height="0.9" fill="#66a6da"/><rect x="0" y="8.2" width="12" height="2.7" fill="#2d6db2"/><rect x="0" y="10.0" width="12" height="0.9" fill="#66a6da"/></svg><span class="abs" style="left:79px;letter-spacing:0px">Customer.run() line: 9</span></div>
<div class="row" style="top:184px;width:641px"><svg class="abs" style="left:63px;top:5px" width="12" height="12" viewBox="0 0 12 12"><defs><linearGradient id="fb" x1="0" y1="0" x2="0" y2="1"><stop offset="0" stop-color="#2a67aa"/><stop offset="1" stop-color="#5b9fd6"/></linearGradient></defs><rect x="0" y="0.6" width="12" height="2.7" fill="#2d6db2"/><rect x="0" y="2.4" width="12" height="0.9" fill="#66a6da"/><rect x="0" y="4.4" width="12" height="2.7" fill="#2d6db2"/><rect x="0" y="6.2" width="12" height="0.9" fill="#66a6da"/><rect x="0" y="8.2" width="12" height="2.7" fill="#2d6db2"/><rect x="0" y="10.0" width="12" height="0.9" fill="#66a6da"/></svg><span class="abs" style="left:79px;letter-spacing:-0.11px">Thread.run() line: 748</span></div>
<div class="row" style="top:207px;width:641px"><svg class="abs" style="left:32px;top:3px" width="14" height="15" viewBox="0 0 14 15"><rect x="5.6" y="0.5" width="7" height="13.6" rx="0.8" fill="#c2c6da" stroke="#8c8c70" stroke-width="0.9"/><rect x="6.6" y="3.8" width="5" height="1.2" fill="#eef0f6"/><rect x="6.6" y="6.6" width="5" height="1.2" fill="#eef0f6"/><polygon points="7.2,1.6 7.2,3.4 9,2.5" fill="#3a9a4a"/><polygon points="0.4,8 0.4,14.6 6.6,11.3" fill="#4aa860" stroke="#7cc890" stroke-width="0.5"/></svg><span class="abs" style="left:49px;letter-spacing:0.042px">/home/abdulmohsin/devTools/jdk1.8.0_161/bin/java (08-Mar-2018, 3:26:58 PM)</span></div>
  </div>
</div>


<div class="panel" id="vars" style="left:656px;top:43px;width:400px;height:284px">
  <div class="tabbar">
    <div class="tab active" style="left:0;width:113px"><span class="abs" style="left:3.8px;top:6.4px;font-size:9px;line-height:12px;letter-spacing:0.3px;color:#34446e;-webkit-text-stroke:0.2px #34446e">(x)=</span><span class="abs" style="left:24px;letter-spacing:0.2px">Variables</span><svg class="abs" style="left:95px;top:8px" width="11" height="11" viewBox="0 0 11 11"><path d="M2 0.6 L5.2 3.4 L8.4 0.6 L10 2.2 L7.2 5.4 L10 8.6 L8.4 10.2 L5.2 7.4 L2 10.2 L0.4 8.6 L3.2 5.4 L0.4 2.2 Z" fill="#fff" stroke="#111" stroke-width="1.1" stroke-linejoin="round"/></svg></div>
    <div class="tab" style="left:113px"><svg class="abs" style="left:5px;top:7px" width="14" height="12" viewBox="0 0 14 12"><circle cx="3.5" cy="3.5" r="2.9" fill="#6aa8dc" stroke="#2a5a8c" stroke-width="0.9"/><circle cx="10.4" cy="8.4" r="2.9" fill="#6aa8dc" stroke="#2a5a8c" stroke-width="0.9"/></svg><span class="abs" style="left:24.5px;letter-spacing:0.15px">Breakpoints</span></div>
  </div>
  <div class="content" id="vtree" style="left:2px;top:28px;width:400px;height:252px">
    <div class="abs" style="left:0;top:0;width:400px;height:27px;background:linear-gradient(#fff,#f6f6f6);border-bottom:1px solid #d9d9d9"></div>
    <div class="abs" style="left:319px;top:0;width:1px;height:27px;background:#d9d9d9"></div>
    <div class="abs" style="left:7px;top:0;height:27px;line-height:28px;color:#444">Name</div>
    <div class="abs" style="left:326px;top:0;height:27px;line-height:28px;color:#444">Value</div>
    <div class="abs" style="left:319px;top:28px;width:0;height:93px;border-left:1px dotted #f07746"></div>
    <div class="row" style="top:28px"><svg class="abs" style="left:19px;top:7px" width="12" height="10" viewBox="0 0 12 10"><path d="M6.2 2.6 V0.9 H0.9 V8.5 H6.2 V6.8" fill="none" stroke="#5a5a5a" stroke-width="1.8"/><path d="M3.8 4.7 H9" stroke="#1a1a1a" stroke-width="1.4"/><polygon points="8.6,2.3 12,4.7 8.6,7.1" fill="#1a1a1a"/></svg><span class="abs" style="left:34px">no method return value</span></div>
    <div class="row" style="top:51px"><svg class="abs" style="left:20.8px;top:7.8px" width="7" height="7" viewBox="0 0 7 7"><circle cx="3.2" cy="3.2" r="2.4" fill="#fff" stroke="#2f8a4a" stroke-width="1.5"/></svg><span class="abs" style="left:34px">this</span></div>
    <div class="row" style="top:74px"><svg class="abs" style="left:5.5px;top:5.5px" width="6" height="11" viewBox="0 0 6 11"><polygon points="0,0 6,5.5 0,11" fill="#2b2b2b"/></svg><svg class="abs" style="left:19.5px;top:7.2px" width="10" height="10" viewBox="0 0 10 10"><defs><linearGradient id="lg" x1="0" y1="0" x2="0" y2="1"><stop offset="0" stop-color="#a4a4a4"/><stop offset="1" stop-color="#767676"/></linearGradient></defs><circle cx="4.8" cy="4.8" r="4.3" fill="url(#lg)"/><path d="M3.7 2.4 V6.8 H6.6" fill="none" stroke="#fff" stroke-width="1.2"/></svg><span class="abs" style="left:34px">bank</span></div>
    <div class="row" style="top:97px"><svg class="abs" style="left:5.5px;top:5.5px" width="6" height="11" viewBox="0 0 6 11"><polygon points="0,0 6,5.5 0,11" fill="#2b2b2b"/></svg><svg class="abs" style="left:19.5px;top:7.2px" width="10" height="10" viewBox="0 0 10 10"><defs><linearGradient id="lg" x1="0" y1="0" x2="0" y2="1"><stop offset="0" stop-color="#a4a4a4"/><stop offset="1" stop-color="#767676"/></linearGradient></defs><circle cx="4.8" cy="4.8" r="4.3" fill="url(#lg)"/><path d="M3.7 2.4 V6.8 H6.6" fill="none" stroke="#fff" stroke-width="1.2"/></svg><span class="abs" style="left:34px">account</span></div>
    <div class="abs" style="left:0;top:171px;width:400px;height:5px;background:#f0f0f0"></div>
    <div class="abs" style="left:0;top:247px;width:400px;height:5px;background:#f28a61"></div>
  </div>
</div>


<div class="panel" id="editor" style="left:5px;top:331px;width:970px;height:251px;background:#fff">
  <div class="tabbar" style="height:26px;background:#eeeeee;border-bottom-color:#adadad">
    <div class="tab active" style="left:0;width:145px;background:#fff;height:28px"><svg class="abs" style="left:7px;top:6.4px" width="12" height="14" viewBox="0 0 12 14"><path d="M0.6 0.6 H7 L10.6 4 V13.4 H0.6 Z" fill="#f4f8fd" stroke="#a8883a" stroke-width="1"/><path d="M7 0.6 V4 H10.6" fill="#f8e8b0" stroke="#a8883a" stroke-width="0.8"/><path d="M6.6 3.6 v5 q0 1.8 -1.6 1.8 q-1 0 -1.4 -0.7" fill="none" stroke="#2a4f9a" stroke-width="1.5"/></svg><span class="abs" style="left:24.8px;letter-spacing:-0.14px">Customer.java</span><svg class="abs" style="left:127px;top:8px" width="11" height="11" viewBox="0 0 11 11"><path d="M2 0.6 L5.2 3.4 L8.4 0.6 L10 2.2 L7.2 5.4 L10 8.6 L8.4 10.2 L5.2 7.4 L2 10.2 L0.4 8.6 L3.2 5.4 L0.4 2.2 Z" fill="#fff" stroke="#111" stroke-width="1.1" stroke-linejoin="round"/></svg></div>
    <div class="tab" style="left:145px"><svg class="abs" style="left:7px;top:6.4px" width="12" height="14" viewBox="0 0 12 14"><path d="M0.6 0.6 H7 L10.6 4 V13.4 H0.6 Z" fill="#f4f8fd" stroke="#a8883a" stroke-width="1"/><path d="M7 0.6 V4 H10.6" fill="#f8e8b0" stroke="#a8883a" stroke-width="0.8"/><path d="M6.6 3.6 v5 q0 1.8 -1.6 1.8 q-1 0 -1.4 -0.7" fill="none" stroke="#2a4f9a" stroke-width="1.5"/></svg><span class="abs" style="left:24px;letter-spacing:-0.33px">Bank.java</span></div>
    <div class="tab" style="left:258px"><svg class="abs" style="left:7px;top:6.4px" width="12" height="14" viewBox="0 0 12 14"><path d="M0.6 0.6 H7 L10.6 4 V13.4 H0.6 Z" fill="#f4f8fd" stroke="#a8883a" stroke-width="1"/><path d="M7 0.6 V4 H10.6" fill="#f8e8b0" stroke="#a8883a" stroke-width="0.8"/><path d="M6.6 3.6 v5 q0 1.8 -1.6 1.8 q-1 0 -1.4 -0.7" fill="none" stroke="#2a4f9a" stroke-width="1.5"/></svg><span class="abs" style="left:24px;letter-spacing:-0.13px">BankAccount.java</span></div>
    <svg class="abs" style="left:928.6px;top:7.6px" width="10" height="5" viewBox="0 0 10 5"><rect x="0.6" y="0.6" width="8.8" height="3" fill="#fff" stroke="#111" stroke-width="1.2"/></svg><svg class="abs" style="left:946.6px;top:8px" width="11" height="11" viewBox="0 0 11 11"><rect x="0.6" y="0.6" width="9" height="9" fill="#fff" stroke="#111" stroke-width="1.2"/><rect x="0.6" y="0.6" width="9" height="1.5" fill="#111"/></svg>
  </div>
  <div class="content" id="code" style="left:0;top:27px;width:968px;height:222px">
<div class="abs" style="left:2px;top:1px;width:38px;height:219px;background:#f6f6f6"></div>
<div class="abs" style="left:14px;top:1px;width:26px;height:204px;background:#fdfdfd"></div>
<div class="abs" style="left:2px;top:1px;width:12px;height:219px;background:#f3f3f3"></div>
<div class="abs" style="left:2px;top:69px;width:12px;height:119px;background:repeating-conic-gradient(#f07746 0% 25%,#fff 0% 50%) 0 0/2px 2px;border-top:1px solid #f07746"></div>
<div class="abs" style="left:39px;top:1px;width:1px;height:204px;background:#f0f0f0"></div>
<div class="abs" style="left:42px;top:137px;width:911px;height:17px;background:#e8f2fe"></div>
<div class="abs" style="left:42px;top:137px;width:232px;height:17px;background:#c3dbac"></div>
<div class="abs" style="left:953px;top:1px;width:13px;height:218px;background:#f7f7f7"></div>
<div class="abs" style="left:955px;top:149px;width:9px;height:4px;border:1px solid #c3dbac;background:#eef5e6"></div>
<div class="ln" style="left:10px;top:1px">1</div><div class="code" style="left:42px;top:1px"><span class="kw">package</span> com.one97.bankingapp;</div>
<div class="ln" style="left:10px;top:18px">2</div><div class="code" style="left:42px;top:18px"></div>
<div class="ln" style="left:10px;top:35px">3</div><div class="code" style="left:42px;top:35px"><span class="kw">public</span> <span class="kw">class</span> Customer <span class="kw">implements</span> Runnable {</div>
<div class="ln" style="left:10px;top:52px">4</div><div class="code" style="left:42px;top:52px"></div>
<div class="ln" style="left:10px;top:69px">5</div><div class="code" style="left:42px;top:69px">    <span class="an">@Override</span></div>
<div class="ln" style="left:10px;top:86px">6</div><div class="code" style="left:42px;top:86px">    <span class="kw">public</span> <span class="kw">void</span> run() {</div>
<div class="ln" style="left:10px;top:103px">7</div><div class="code" style="left:42px;top:103px">        Bank <span class="lv">bank</span> = Bank.<i>getInstance</i>();</div>
<div class="ln" style="left:10px;top:120px">8</div><div class="code" style="left:42px;top:120px">        BankAccount <span class="lv">account</span> = <span class="lv">bank</span>.openNewAccount();</div>
<div class="ln" style="left:10px;top:137px">9</div><div class="code" style="left:42px;top:137px">        <span class="lv">account</span>.deposit(100);</div>
<div class="ln" style="left:10px;top:154px">10</div><div class="code" style="left:42px;top:154px">        <span class="lv">account</span>.withdraw(200);</div>
<div class="ln" style="left:10px;top:171px">11</div><div class="code" style="left:42px;top:171px">    }</div>
<div class="ln" style="left:10px;top:188px">12</div><div class="code" style="left:42px;top:188px">}</div>
<svg class="abs" style="left:29.8px;top:71.6px" width="10" height="10" viewBox="0 0 10 10"><circle cx="4.7" cy="4.7" r="4.1" fill="#cfdff0" stroke="#a4bcd8" stroke-width="0.9"/><rect x="2.2" y="4.2" width="5" height="1" fill="#4a6a9a"/></svg><svg class="abs" style="left:3px;top:90.2px" width="11" height="7" viewBox="0 0 11 7"><polygon points="5.3,0.9 10,5.2 0.6,5.2" fill="#fff" stroke="#4a3ac8" stroke-width="0.95" stroke-linejoin="round"/></svg><svg class="abs" style="left:2px;top:139.6px" width="11" height="13" viewBox="0 0 11 13"><path d="M5.4 1 Q10.6 1.8 10.6 5.1 Q10.6 8.4 5.4 9.2 L8.8 5.1 Z" fill="#2a5e96"/><polygon points="2.6,-0.2 4.4,-0.2 9,5.1 4.4,10.4 2.6,10.4 7,5.1" fill="#fff"/><polygon points="2.4,0.2 7,5.1 2.4,10 2.4,7.2 0,7.2 0,3 2.4,3" fill="#1f62ac"/><rect x="0" y="3.9" width="4.6" height="2.4" fill="#5b9bd8"/><path d="M0.2 9.6 l1.4 2.4" stroke="#2a66b0" stroke-width="1.1"/></svg></div>
</div>


<div class="panel" id="outline" style="left:979px;top:331px;width:100px;height:251px;background:#ebebeb">
  <div class="content" style="left:2px;top:27px;width:100px;height:220px"></div>
  <div class="abs" style="left:5px;top:6px;width:7px;height:6px;border:1px solid #2a72c8;background:#b8d8f4"></div><div class="abs" style="left:5px;top:15px;width:7px;height:6px;border:1px solid #2a72c8;background:#b8d8f4"></div><svg class="abs" style="left:5px;top:59.4px" width="8" height="5" viewBox="0 0 8 5"><polygon points="0,0 8,0 4,4.6" fill="#2b2b2b"/></svg><div class="abs" style="left:2px;top:74px;width:10px;height:22px;background:#f07746"></div>
</div>

<div class="abs" style="left:10px;top:586px;width:978px;height:1px;background:#b8b8b8"></div>
</body>
</html>
